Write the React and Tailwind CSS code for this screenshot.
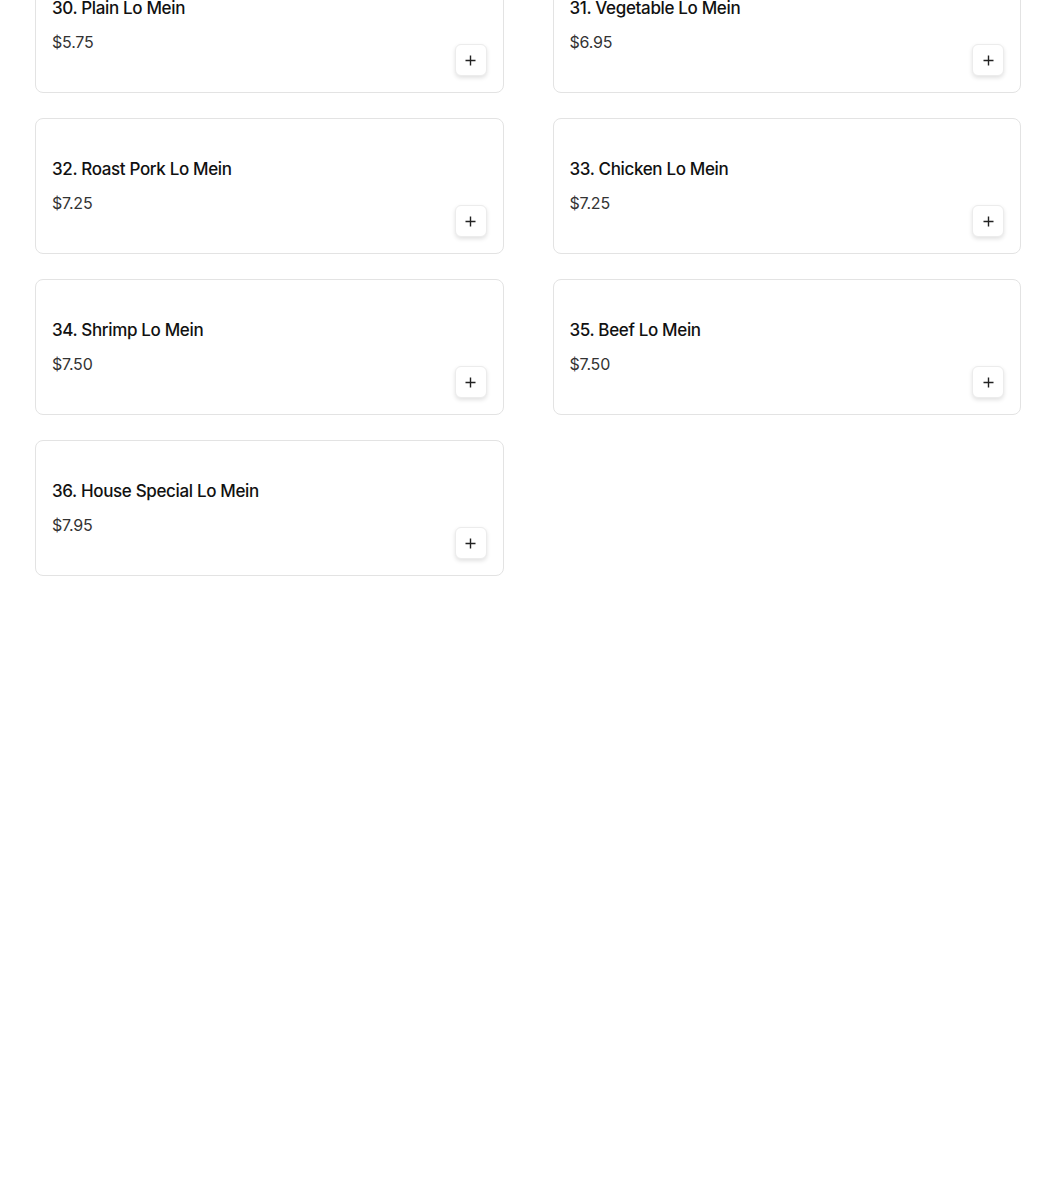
import React from "react";

const items = [
  ["30. Plain Lo Mein", "$5.75"],
  ["31. Vegetable Lo Mein", "$6.95"],
  ["32. Roast Pork Lo Mein", "$7.25"],
  ["33. Chicken Lo Mein", "$7.25"],
  ["34. Shrimp Lo Mein", "$7.50"],
  ["35. Beef Lo Mein", "$7.50"],
  ["36. House Special Lo Mein", "$7.95"],
];

function Plus() {
  return (
    <svg width="11" height="11" viewBox="0 0 11 11" fill="none">
      <path d="M5.5 0.5v10M0.5 5.5h10" stroke="#222" strokeWidth="1.4" />
    </svg>
  );
}

export default function App() {
  return (
    <div
      className="min-h-[1197px] bg-white pl-[35px] pr-[29px]"
      style={{ fontFamily: 'Inter, "Open Sans", sans-serif' }}
    >
      <div className="mt-[-43px] grid grid-cols-2 gap-x-[49px] gap-y-[25px]">
        {items.map(([name, price]) => (
          <div
            key={name}
            className="flex h-[136px] justify-between rounded-lg border border-[#e3e3e3] bg-white p-4"
          >
            <div className="pt-[22px]">
              <div className="text-[17px] leading-6 font-medium text-[#111] tracking-[-0.35px]">
                {name}
              </div>
              <div className="mt-[10px] text-[16px] leading-6 text-[#333] tracking-[-0.2px]">
                {price}
              </div>
            </div>
            <button className="flex h-8 w-8 self-end items-center justify-center rounded-md border border-[#ececec] bg-white shadow-[0_2px_4px_rgba(0,0,0,0.12)]">
              <Plus />
            </button>
          </div>
        ))}
      </div>
    </div>
  );
}
